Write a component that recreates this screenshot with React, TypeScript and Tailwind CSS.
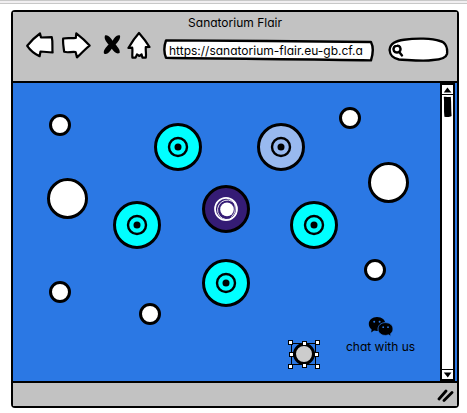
import React from 'react';

const iconButton = 'flex h-7 items-center justify-center';

function Toolbar() {
  return (
    <div className="flex items-start pl-3 pr-2">
      <button type="button" aria-label="Back" className={`${iconButton} mr-1.5 w-[30px]`}>
        <svg width="30" height="28" viewBox="0 0 30 28" fill="#fff" stroke="#000" strokeWidth="2.2" strokeLinejoin="round">
          <path d="M2.2 14.8 C6 10 10 6 15 2.5 L16 6.5 L26.8 6.2 C28 11 27 16 27.6 21.5 L15.5 20.5 L14.6 25.2 C9 22.5 5 19 2.2 14.8Z" />
        </svg>
      </button>
      <button type="button" aria-label="Forward" className={`${iconButton} mr-2 w-[30px]`}>
        <svg width="30" height="28" viewBox="0 0 30 28" fill="#fff" stroke="#000" strokeWidth="2.2" strokeLinejoin="round">
          <path d="M2.2 7.5 C6 6.5 10 7.5 14.8 6.8 L15.3 2.4 C20 6 24.5 10 28.6 14.6 C24 18 20.5 22.5 16 26.4 L14.6 21 C10 20.5 7 22 3.2 20.8 C2.6 16 1.6 12 2.2 7.5Z" />
        </svg>
      </button>
      <button type="button" aria-label="Stop" className={`${iconButton} w-[28px]`}>
        <svg width="28" height="28" viewBox="0 0 28 28" fill="#000">
          <path d="M6 4.4 C9 3.4 11.6 6.6 13.6 9.8 C15.4 6.4 17.6 3.4 21 4.4 C21.8 7.6 19 10.6 16.6 13.6 C19 16.4 21.4 19.4 20.6 22 C17.8 23.6 15 21 12.8 17.8 C10.8 20.8 8 24.2 5 22.4 C4 19.4 7 16.2 9.6 13.4 C7 10.6 4.8 7.4 6 4.4Z" />
        </svg>
      </button>
      <button type="button" aria-label="Home" className={`${iconButton} mr-3 w-[24px]`}>
        <svg width="24" height="28" viewBox="0 0 24 28" fill="#fff" stroke="#000" strokeWidth="2.2" strokeLinejoin="round">
          <path d="M12 2 C15.5 6 19.5 11 22.5 16 L18.8 16.2 C18.5 20 19.4 23 18.8 26.6 L15.4 26.6 L14.6 23.4 L12.4 25 L10 23.4 L8.6 26.6 L5.4 26.6 C5 23 5.8 19.5 5.2 16.6 L1.4 17 C4.4 11.8 8 6.4 12 2Z" />
        </svg>
      </button>
      <div className="relative mt-2 flex h-[23px] min-w-0 flex-1">
        <svg className="absolute inset-0 h-full w-full" viewBox="0 0 209 23" preserveAspectRatio="none" fill="#fff" stroke="#000" strokeWidth="2.4" strokeLinejoin="round">
          <path d="M3 1.4 C60 2 150 2 206 3 C208.6 8 208 15 206 21.4 C150 20 60 20 3 18.8 C.6 13 1 7 3 1.4Z" />
        </svg>
        <input
          aria-label="Address"
          type="text"
          defaultValue="https://sanatorium-flair.eu-gb.cf.a"
          className="relative h-[22px] w-full bg-transparent px-[6px] text-[12px] leading-5 outline-none"
        />
      </div>
      <div className="relative ml-[14px] mt-1.5 flex h-[25px] w-[61px]">
        <svg className="absolute inset-0" width="61" height="25" viewBox="0 0 61 25" fill="#fff" stroke="#000" strokeWidth="2.4">
          <path d="M1.6 13 C2 6 8 4 16 2.8 C28 1 44 1.2 52 4 C58.4 5.4 59.6 12 59 17 C58 21 52 22.6 45 23 C35 24.6 20 22.8 11 22.5 C4 21 2 18 1.6 13Z" />
          <path d="M9 8.8 C12 8.4 13 11 12.2 13.6 C11 16 7.4 16.2 6 14 C4.6 11 6.4 8.8 9 8.8Z M11.6 15.4 L14 18.4" strokeLinecap="round" />
        </svg>
        <input aria-label="Search" type="text" className="relative ml-4 w-9 bg-transparent text-[12px] outline-none" />
      </div>
    </div>
  );
}

const bubble = 'absolute rounded-full border-[3px] border-black bg-white';
const node = 'absolute flex h-12 w-12 items-center justify-center rounded-full border-[3px] border-black';

function Target() {
  return (
    <svg width="22" height="22" viewBox="0 0 22 22" className="shrink-0">
      <circle cx="11" cy="11" r="9" fill="none" stroke="#000" strokeWidth="2.4" />
      <circle cx="11" cy="11" r="3.5" />
    </svg>
  );
}

function Swirl() {
  return (
    <svg width="26" height="26" viewBox="0 0 26 26" className="shrink-0" fill="none" stroke="#fff">
      <circle cx="14" cy="13.4" r="6.8" fill="#fff" stroke="none" />
      <ellipse cx="13" cy="13" rx="11" ry="11.2" strokeWidth="1.7" />
      <ellipse cx="14.2" cy="13.8" rx="9.6" ry="9.8" strokeWidth=".8" transform="rotate(30 14.2 13.8)" />
      <path d="M20 5.4 C23.4 9.4 23 17 18.4 20.6" strokeWidth=".8" />
    </svg>
  );
}

function Selection() {
  const handles = [
    [3, 3], [17, 4], [30, 3],
    [4, 15], [29, 15],
    [3, 27], [17, 26], [30, 27],
  ];
  return (
    <svg className="absolute left-[274px] top-[256px]" width="34" height="31" viewBox="0 0 34 31">
      <rect x="4.5" y="4.5" width="24" height="21" fill="none" stroke="#000" />
      {handles.map(([x, y]) => (
        <rect key={`${x}-${y}`} x={x - 1.5} y={y - 1.5} width="4" height="4" fill="#fff" stroke="#000" />
      ))}
    </svg>
  );
}

function Canvas() {
  return (
    <main className="relative h-[298px] min-w-0 flex-1 overflow-hidden">
      <div className={`${bubble} left-[36px] top-[31px] h-[22px] w-[22px]`} />
      <div className={`${bubble} left-[326px] top-[24px] h-[22px] w-[22px]`} />
      <div className={`${bubble} left-[36px] top-[198px] h-[22px] w-[22px]`} />
      <div className={`${bubble} left-[126px] top-[220px] h-[22px] w-[22px]`} />
      <div className={`${bubble} left-[351px] top-[176px] h-[22px] w-[22px]`} />
      <div className={`${bubble} left-[34px] top-[95px] h-[41px] w-[41px]`} />
      <div className={`${bubble} left-[355px] top-[79px] h-[41px] w-[41px]`} />

      <button type="button" aria-label="Node 1" className={`${node} left-[141px] top-[40px] bg-[#00ffff]`}><Target /></button>
      <button type="button" aria-label="Node 2" className={`${node} left-[244px] top-[40px] bg-[#98b9ef]`}><Target /></button>
      <button type="button" aria-label="Node 3" className={`${node} left-[100px] top-[118px] bg-[#00ffff]`}><Target /></button>
      <button type="button" aria-label="Center node" className={`${node} left-[189px] top-[102px] bg-[#351c75]`}><Swirl /></button>
      <button type="button" aria-label="Node 4" className={`${node} left-[277px] top-[118px] bg-[#00ffff]`}><Target /></button>
      <button type="button" aria-label="Node 5" className={`${node} left-[189px] top-[176px] bg-[#00ffff]`}><Target /></button>

      <div className="absolute left-[280px] top-[260px] h-[22px] w-[22px] rounded-full border-[3px] border-black bg-[#cccccc]" />
      <Selection />

      <button type="button" className="absolute left-[333px] top-[233px] flex flex-col items-center whitespace-nowrap text-[12px] leading-5">
        <svg width="26" height="21" viewBox="0 0 26 21">
          <path d="M9 1 C14 1 17.4 4 17.4 8 C17.4 12 14 15 9 15 C8 15 7 14.8 6 14.6 L3.2 16.4 L3.6 13.4 C1.8 12 .8 10.2 .8 8 C.8 4 4.4 1 9 1Z" />
          <path d="M17.4 6.6 C21.8 6.6 25 9.4 25 13 C25 15 24 16.6 22.6 17.8 L23 20.2 L20.4 18.8 C19.4 19.2 18.4 19.4 17.4 19.4 C13 19.4 10 16.6 10 13 C10 9.4 13 6.6 17.4 6.6Z" stroke="#2b78e4" strokeWidth=".8" />
          <g fill="#2b78e4">
            <circle cx="6.2" cy="5.8" r="1" />
            <circle cx="11.6" cy="5.8" r="1" />
            <circle cx="15.2" cy="11.2" r=".9" />
            <circle cx="20" cy="11.2" r=".9" />
          </g>
        </svg>
        <span>chat with us</span>
      </button>
    </main>
  );
}

function Scrollbar() {
  return (
    <div className="mr-[2px] flex w-[15px] flex-col border-2 border-black bg-white">
      <button type="button" aria-label="Scroll up" className="flex h-[10px] items-center justify-center border-b border-black">
        <svg width="9" height="6" viewBox="0 0 9 6"><path d="M4.4 .4 L8.4 5.6 L.8 5.4Z" /></svg>
      </button>
      <div className="flex flex-1 justify-center pt-px">
        <svg width="9" height="22" viewBox="0 0 9 22">
          <path d="M.8 .8 C3 .2 5.4 1.4 7.8 .8 C8.4 7 8 13 8.6 20 C6.4 21.6 3.4 21 1.4 20.8 C.6 14 1.4 7 .8 .8Z" />
        </svg>
      </div>
      <button type="button" aria-label="Scroll down" className="flex h-[10px] items-center justify-center border-t border-black">
        <svg width="9" height="6" viewBox="0 0 9 6"><path d="M.8 .6 L8.4 .4 L4.8 5.6Z" /></svg>
      </button>
    </div>
  );
}

export default function App() {
  return (
    <div className="min-h-screen bg-white font-['Inter','Liberation_Sans',sans-serif] text-black [font-feature-settings:'cv11']">
      <div className="h-1 border-y border-[#c8c8c8] bg-[#f1eff1]" />
      <div className="ml-[11px] mr-2 mt-[6px] rounded-sm border-2 border-black bg-[#2b78e4]">
        <header className="h-[71px] border-b-2 border-black bg-[#c2c2c2]">
          <h1 className="pt-[3px] text-center text-[12px] leading-4">Sanatorium Flair</h1>
          <Toolbar />
        </header>
        <div className="flex">
          <Canvas />
          <Scrollbar />
        </div>
        <footer className="flex h-[25px] items-center justify-end border-t-2 border-black bg-[#c2c2c2] pr-[3px]">
          <svg width="17" height="14" viewBox="0 0 17 14" stroke="#000" strokeWidth="2.8" strokeLinecap="round">
            <path d="M2 11 L9 3 M7 12.4 L15 4.4" fill="none" />
          </svg>
        </footer>
      </div>
    </div>
  );
}
